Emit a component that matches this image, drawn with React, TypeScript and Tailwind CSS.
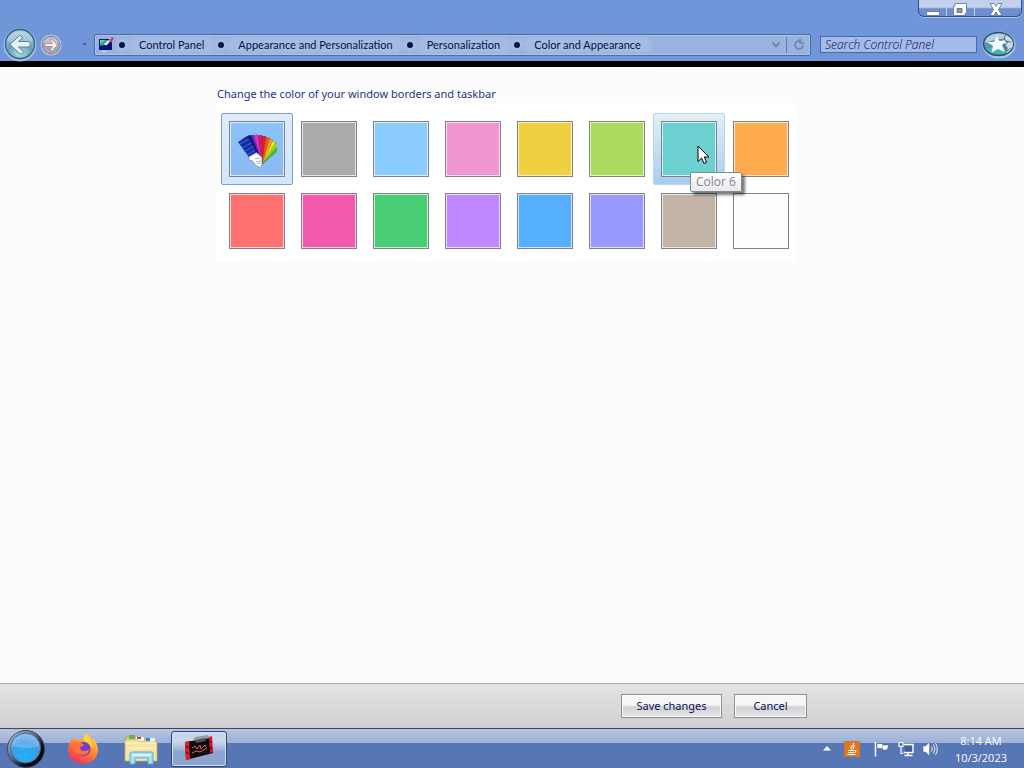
import React, { useState } from 'react'

interface Swatch {
  name: string
  fill: string
}

const swatches: Swatch[] = [
  { name: 'Custom', fill: 'bg-linear-to-b from-[#8cc4fb] to-[#8bb9f2]' },
  { name: 'Color 1', fill: 'bg-[#aaaaaa]' },
  { name: 'Color 2', fill: 'bg-[#8accff]' },
  { name: 'Color 3', fill: 'bg-[#f296d2]' },
  { name: 'Color 4', fill: 'bg-[#f0d040]' },
  { name: 'Color 5', fill: 'bg-[#acda5c]' },
  { name: 'Color 6', fill: 'bg-[#6cd0d0]' },
  { name: 'Color 7', fill: 'bg-[#ffac50]' },
  { name: 'Color 8', fill: 'bg-[#ff7070]' },
  { name: 'Color 9', fill: 'bg-[#f25aac]' },
  { name: 'Color 10', fill: 'bg-[#48cc74]' },
  { name: 'Color 11', fill: 'bg-[#c088ff]' },
  { name: 'Color 12', fill: 'bg-[#56aeff]' },
  { name: 'Color 13', fill: 'bg-[#9898ff]' },
  { name: 'Color 14', fill: 'bg-[#c2b4a6]' },
  { name: 'Color 15', fill: 'bg-[#fdfdfd]' }
]

const crumbs = ['Control Panel', 'Appearance and Personalization', 'Personalization', 'Color and Appearance']

const BackIcon = () => (
  <svg viewBox="0 0 34 34" className="size-[34px]">
    <defs>
      <radialGradient id="back" cx="50%" cy="85%" r="85%">
        <stop offset="0" stopColor="#a6dce4" />
        <stop offset="0.5" stopColor="#6a9fb8" />
        <stop offset="1" stopColor="#a9cfe0" />
      </radialGradient>
    </defs>
    <circle cx="17" cy="17" r="16.5" fill="#a8cce8" fillOpacity="0.8" />
    <circle cx="17" cy="16" r="14.5" fill="url(#back)" stroke="#34617f" strokeWidth="1.3" />
    <path d="M4 13a13.5 13.5 0 0 1 26 0q-13 5-26 0z" fill="#fff" fillOpacity="0.3" />
    <path d="M7 16.500 16 8q3.500-1 3 2.500L15.500 13.500H26q3 2.700 0 5.500H15.500L20.500 23.500q0 3.500-4 2z" fill="#e6f0f4" stroke="#4a7f99" strokeWidth="0.9" />
  </svg>
)

const ForwardIcon = () => (
  <svg viewBox="0 0 22 22" className="size-[22px]">
    <circle cx="11" cy="11" r="10.5" fill="#c5d4ea" fillOpacity="0.9" />
    <circle cx="11" cy="11" r="9" fill="#aaa4b2" stroke="#7d7f92" />
    <path d="M3 9a8.500 8.500 0 0 1 16 0q-8 3-16 0z" fill="#fff" fillOpacity="0.3" />
    <path d="M17.500 11 12 5.500q-2-.5-1.500 1.500L12.500 9.500H5v3h7.500L10.500 15.500q0 2 2 1.200z" fill="#f6f0ef" stroke="#8c8593" strokeWidth="0.7" />
  </svg>
)

const PersonalizeIcon = () => (
  <svg viewBox="0 0 16 16" className="size-4">
    <path d="M1 2h13v11H1z" fill="#10107a" />
    <path d="M2 3h9L6 8l-4 1z" fill="#2fae5a" />
    <path d="M2 3h5L2 7z" fill="#5ccbd8" />
    <path d="M6 7q1 2 3 1l4-5-1-1z" fill="#f4f4ff" />
    <path d="m11 4 3-4 2 1-3 5z" fill="#c93a86" />
    <path d="M4 14h4v1H4z" fill="#d8e6d8" />
  </svg>
)

const StarOrb = () => (
  <svg viewBox="0 0 34 28" className="h-7 w-[34px]">
    <ellipse cx="17" cy="14" rx="16.5" ry="13.5" fill="#a5c8e6" />
    <ellipse cx="16.5" cy="13" rx="15" ry="11.5" fill="#5794ac" stroke="#274e6c" strokeWidth="1.4" />
    <path d="M2.500 12Q4 3 16 2.500T30 12q-7-5-13-4T2.500 12z" fill="#b7cfdf" />
    <path d="M4 18q8 8 21 3l-8-6z" fill="#45b5b2" />
    <path d="M24 4q7 3 7 9t-8 10l3-6-4-5z" fill="#c9dbe6" />
    <path d="m14.500 5 3 5 8-1-5.500 5 3 7-7-3-6.500 3.500 1.500-6.500-6-4h7z" fill="#f6fafb" />
    <path d="m24 2-2 6 4 3-4 4 3 4-3 6m1-15 6 1m-4 9 4-3" fill="none" stroke="#40697f" strokeWidth="0.9" />
  </svg>
)

const FanIcon = () => {
  const blades = ['#3fc832', '#8fdc28', '#f0e020', '#f5a01c', '#ee5a24', '#e0202a', '#d81c64', '#e030c8', '#7a28c0', '#2434b8']
  return (
    <svg viewBox="0 0 40 38" className="mt-0.5 h-[38px] w-10">
      {blades.map((color, i) => (
        <path
          key={color}
          d={`M20 ${8 - i * 0.6}h7l-2 ${24 + i * 0.6}h-3z`}
          fill={color}
          stroke="#20104055"
          strokeWidth="0.5"
          transform={`rotate(${44 - i * 8} 23.5 33)`}
        />
      ))}
      <path d="M1 11 10 5l11 19-7 5z" fill="#1430a4" />
      <path d="M10 5 14 4l8 19-1 1z" fill="#0c1c78" />
      <path d="m3 13 9-5M5 17l9-5M7.500 20.500l9-5M10 24l8-5" stroke="#4064dc" />
      <path d="m11.500 26 8-4.500 5.500 5v7l-2 3-4-2-4-5-2 .500z" fill="#fff" stroke="#70758c" strokeWidth="0.6" />
      <path d="m18 28 5-1m-4 4 5-1m-4 3 4-1" stroke="#a9adb9" />
    </svg>
  )
}

const CursorIcon = () => (
  <svg viewBox="0 0 13 20" className="absolute left-11 top-8 z-10 h-5 w-[13px]">
    <path d="M1 1v15.500l3.700-3.500L7 18.500l2.600-1.200L7.300 12H12z" fill="#fff" stroke="#000" />
  </svg>
)

const StartOrb = () => (
  <svg viewBox="0 0 40 38" className="h-[38px] w-10">
    <defs>
      <radialGradient id="orb" cx="50%" cy="75%" r="75%">
        <stop offset="0" stopColor="#24b2ff" />
        <stop offset="0.6" stopColor="#3c9ce4" />
        <stop offset="1" stopColor="#7ab6e6" />
      </radialGradient>
      <linearGradient id="rim" x2="1" y2="1">
        <stop offset="0" stopColor="#c9d4e4" />
        <stop offset="0.45" stopColor="#56637b" />
        <stop offset="0.7" stopColor="#05080f" />
      </linearGradient>
    </defs>
    <circle cx="20" cy="19" r="18.5" fill="url(#rim)" stroke="#3b4963" />
    <circle cx="19.5" cy="18" r="15" fill="url(#orb)" stroke="#4a6a8c" />
    <path d="M5.500 16q2-11 14-12 12 1 14 12-14 4-28 0z" fill="#fff" fillOpacity="0.2" />
  </svg>
)

const FirefoxIcon = () => (
  <svg viewBox="0 0 32 32" className="size-8">
    <defs>
      <linearGradient id="fox" x1="0.8" x2="0.2" y2="1">
        <stop offset="0" stopColor="#ffe14a" />
        <stop offset="0.45" stopColor="#ff8a2c" />
        <stop offset="1" stopColor="#f5285e" />
      </linearGradient>
    </defs>
    <path d="M19 0q4 2 6 7 .5-1 .3-2.500Q31 10 31 17q-1 13-15 13.500Q2 30 1 17q0-6 3-9 0-2 1-4 1 2 2.500 3Q11 6 13 7q2-1 4-1 0-4 2-6z" fill="url(#fox)" />
    <circle cx="16.5" cy="16" r="7" fill="#6f3bd2" />
    <path d="M6 11q5-3 8-1 3 1 3 2-1 2-4 2 0 4 4 4 3 0 5-2 0 6-7 6-8-1-9-11z" fill="#ff7139" />
    <path d="M18 1q7 5 8 14-3-5-8-7-3-3 0-7z" fill="#ffd43a" />
  </svg>
)

const ExplorerIcon = () => (
  <svg viewBox="0 0 34 32" className="h-8 w-[34px]">
    <path d="M2 4h10l2 2h15v21H2z" fill="#e9cf78" stroke="#b89a48" strokeWidth="0.7" />
    <path d="M5 2h6v4H5z" fill="#68b054" />
    <path d="M12 4h8v4h-8zM25 5h6v5h-6z" fill="#f4f2e6" />
    <path d="M13 4h4v2h-4z" fill="#c9452f" />
    <path d="M22 5h4v3h-4z" fill="#3a86c8" />
    <path d="M1 7h13l2 2h17v19H1z" fill="#f6e5a0" stroke="#cdb05c" strokeWidth="0.7" />
    <path d="M2 10h30M2 15h30" stroke="#fdf4cc" />
    <path d="M6 31V21q0-2 2-2h19q2 0 2 2v10h-5v-6H11v6z" fill="#a8dff2" stroke="#5aa8cc" />
    <path d="M8 22h19" stroke="#ecfaff" strokeWidth="1.5" />
  </svg>
)

const RedBoxIcon = () => (
  <svg viewBox="0 0 32 28" className="h-7 w-8">
    <path d="m10 5 2-3 13-2 3 4z" fill="#989ca4" />
    <path d="M2 7 28 3l2 15L3 25z" fill="#110a0c" />
    <path d="m2 7 4-1 1 18-4 1z" fill="#e51d2c" />
    <path d="m26 2 3-1 1 16-3 1z" fill="#d81828" />
    <path d="m12 5 10-2 1 3-10 2z" fill="#50535a" />
    <path d="m9 13 3-2 2 3 3-4 1 4 4-4 1 2M9 18l4-2 4 1 7-4" fill="none" stroke="#e8707a" strokeWidth="0.9" />
    <path d="m3 11 3 2m-3 4 3 2m21-13 2 2m-2 4 2 2" stroke="#6c0810" strokeWidth="1.3" />
  </svg>
)

const JavaIcon = () => (
  <svg viewBox="0 0 16 16" className="size-4">
    <path d="M.5.5h15v15H.5z" fill="#e8741c" stroke="#c07a40" />
    <path d="M9.500 2Q10 4 8 5t0 3.500M11 4.500Q8.500 5.500 9.500 8M4 9.500h6.500m-6 2H10M3.500 13.500h8M11 9.500q2 1-.5 2" fill="none" stroke="#fff" strokeWidth="1.1" />
  </svg>
)

const FlagIcon = () => (
  <svg viewBox="0 0 16 16" className="size-4">
    <path d="M1.500 1v14.500" stroke="#fff" strokeWidth="1.5" />
    <path d="M3 2.500h5.500V4h6.500l-2 5H8.500V7.500H3z" fill="#fff" stroke="#33496f" strokeWidth="0.5" />
    <path d="M8.500 3v5" stroke="#8fa5cc" strokeWidth="0.8" />
  </svg>
)

const NetworkIcon = () => (
  <svg viewBox="0 0 16 16" className="size-4">
    <path d="M6 3.500h9v8H5.500M10 12v2.500M6.500 14.500h8" fill="none" stroke="#fff" strokeWidth="1.4" />
    <path d="M1 1.500h4v4H1zM3 6v6.500h2" fill="none" stroke="#fff" strokeWidth="1.2" />
    <path d="M7 5h7v5.500H7z" fill="#3f5f9c" />
  </svg>
)

const VolumeIcon = () => (
  <svg viewBox="0 0 16 16" className="size-4">
    <path d="M1 5h2.500L7.500 1v14L3.500 11H1z" fill="#fff" stroke="#33496f" strokeWidth="0.4" />
    <path d="M9.500 5.500q1.500 2.500 0 5M11.500 3.500q3 4.500 0 9M13.500 2q3.500 6 0 12" fill="none" stroke="#e4ecf8" />
  </svg>
)

const CaptionButtons = () => (
  <div className="mr-0.5 flex h-[17px] w-26 rounded-b-md border border-t-0 border-[#344f86] bg-linear-to-b from-[#c3d1ec] from-45% to-[#6d8fcf] to-55% shadow-[0_1px_0_#a9c2ee]">
    <button aria-label="Minimize" className="flex w-7 items-end justify-center border-r border-[#c3d4f2]">
      <svg viewBox="0 0 14 5" className="h-[5px] w-3.5"><path d="M.5.5h13v4H.5z" fill="#fff" stroke="#5d6f96" strokeWidth="0.8" /></svg>
    </button>
    <button aria-label="Restore" className="flex w-7 items-end justify-center border-r border-[#c3d4f2]">
      <svg viewBox="0 0 15 13" className="h-[13px] w-[15px]">
        <path d="M2 .5h11.500v10H12v2H.5V3H2z" fill="#fff" stroke="#5d6f96" strokeWidth="0.8" />
        <path d="M4 5.500h5v4H4z" fill="#8c98b4" stroke="#4d5f86" strokeWidth="0.8" />
      </svg>
    </button>
    <button aria-label="Close" className="flex flex-1 items-end justify-center pr-1">
      <svg viewBox="0 0 14 13" className="h-[13px] w-3.5">
        <path d="M1 .5h4l2 3 2-3h4L9.500 6.500 13 12.500H9L7 9l-2 3.500H1L4.500 6.500z" fill="#fff" stroke="#5d6f96" strokeWidth="0.8" />
      </svg>
    </button>
  </div>
)

const Header = () => (
  <header className="border-b-6 border-black bg-[#7095d8]">
    <div className="flex h-7 justify-end">
      <CaptionButtons />
    </div>
    <div className="flex h-[33px] items-center px-[3px]">
      <button aria-label="Back"><BackIcon /></button>
      <button aria-label="Forward" className="ml-[3px]"><ForwardIcon /></button>
      <button aria-label="Recent pages" className="ml-5">
        <svg viewBox="0 0 5 4" className="h-1 w-[5px]"><path d="M0 0h5L2.500 3z" fill="#4468ac" /></svg>
      </button>
      <nav className="ml-[7px] flex h-[22px] min-w-0 flex-1 items-center rounded-xs border border-[#4a6aa8] bg-[#9ab3de] pl-[3px] shadow-[inset_0_0_0_1px_#a9c2e8]">
        <PersonalizeIcon />
        <ol className="flex flex-1 items-center font-['Lato',sans-serif] text-[11px] whitespace-nowrap text-[#0c1040]">
          {crumbs.map((crumb) => (
            <li key={crumb} className="flex items-center">
              <span className="mx-[5px] size-1.5 rounded-full bg-[#0a1040] shadow-[0_0_4px_2px_#aec6ec]" />
              <a href="#" className="rounded-full bg-[#aec6ec]/50 px-[9px] leading-3 shadow-[0_0_4px_2px_#aec6ec80]">{crumb}</a>
            </li>
          ))}
        </ol>
        <button aria-label="Previous locations" className="px-[5px]">
          <svg viewBox="0 0 10 8" className="h-2 w-2.5"><path d="m1.500 1.500 3.500 4 3.500-4" fill="none" stroke="#687da6" strokeWidth="1.8" /></svg>
        </button>
        <button aria-label="Refresh" className="flex h-4 w-6 items-center justify-center border-l border-[#5d7eb8]">
          <svg viewBox="0 0 12 12" className="size-3"><path d="M8 2.500a4 4 0 1 0 2 3.500M7 0v4h4" fill="none" stroke="#6d81a6" strokeWidth="1.6" /></svg>
        </button>
      </nav>
      <input
        type="search"
        aria-label="Search Control Panel"
        placeholder="Search Control Panel"
        className="ml-[9px] h-[17px] w-[157px] border border-[#4a6aa8] bg-[#a3baea] px-1 font-['Open_Sans',sans-serif] text-xs font-light italic placeholder:text-[#0c1040]"
      />
      <button aria-label="Favorites" className="ml-[5px] mr-[5px]"><StarOrb /></button>
    </div>
  </header>
)

interface SwatchButtonProps {
  swatch: Swatch
  selected: boolean
  hovered: boolean
  onSelect: () => void
}

const SwatchButton: React.FC<SwatchButtonProps> = ({ swatch, selected, hovered, onSelect }) => {
  const frame = selected
    ? 'border-[#7f9dc2] bg-linear-to-b from-[#dfebfa] to-[#d4e6fc]'
    : hovered
      ? 'border-[#b4d8ee] bg-linear-to-b from-[#e4f0f6] to-[#a8ccee]'
      : 'border-transparent'

  return (
    <div className="relative">
      <button
        aria-label={swatch.name}
        aria-pressed={selected}
        onClick={onSelect}
        className={`block size-18 rounded-xs border p-[7px] ${frame}`}
      >
        <span className={`flex size-14 items-center justify-center border border-[#808088] shadow-[inset_0_0_0_1px_#ffffffb0] ${swatch.fill}`}>
          {swatch.name === 'Custom' && <FanIcon />}
        </span>
      </button>
      {hovered && (
        <>
          <CursorIcon />
          <div role="tooltip" className="absolute left-[37px] top-[59px] z-10 rounded-xs border border-[#86868c] bg-linear-to-b from-white to-[#e8e8f0] px-[5px] text-xs leading-[18px] whitespace-nowrap text-[#85858a] shadow-[3px_3px_3px_#00000088]">
            {swatch.name}
          </div>
        </>
      )}
    </div>
  )
}

const Taskbar = () => (
  <footer className="flex h-10 items-center border-t border-[#35496f] bg-linear-to-b from-[#b9c5de] from-0% via-[#9db0d8] via-35% to-[#5676b6] to-36% pl-1.5">
    <button aria-label="Start"><StartOrb /></button>
    <button aria-label="Firefox" className="ml-[21px]"><FirefoxIcon /></button>
    <button aria-label="Explorer" className="ml-[25px]"><ExplorerIcon /></button>
    <button aria-label="Color and Appearance" className="ml-[13px] flex h-9 w-14 items-center justify-center rounded-[3px] border border-[#2f456f] bg-linear-to-b from-[#c9d5ea] from-30% to-[#8ba4d2] to-60% shadow-[inset_0_0_0_1px_#d5e0f2]">
      <RedBoxIcon />
    </button>
    <div className="ml-auto flex items-center">
      <button aria-label="Show hidden icons" className="mr-[13px]">
        <svg viewBox="0 0 8 5" className="h-[5px] w-2"><path d="M0 4.500 4 0l4 4.500z" fill="#fff" /></svg>
      </button>
      <button aria-label="Java"><JavaIcon /></button>
      <button aria-label="Action Center" className="ml-3.5"><FlagIcon /></button>
      <button aria-label="Network" className="ml-2"><NetworkIcon /></button>
      <button aria-label="Volume" className="ml-2"><VolumeIcon /></button>
      <div className="mx-[17px] text-center text-[11px] leading-[17px] text-white">
        <div>8:14 AM</div>
        <div>10/3/2023</div>
      </div>
    </div>
  </footer>
)

const App = () => {
  const [selected, setSelected] = useState('Custom')
  const actionClass =
    "h-6 border border-[#8e8f94] bg-linear-to-b from-[#f6f6f6] from-45% via-[#d2d2d2] via-55% to-[#e6e6e6] font-['Noto_Sans',sans-serif] text-[11px] shadow-[inset_0_0_0_1px_#fafafa]"

  return (
    <div className="flex min-h-screen flex-col bg-[#fcfcfc] font-['Open_Sans',sans-serif] text-[#0c1060]">
      <Header />
      <main className="flex-1">
        <div className="mx-auto w-[590px] pt-[18px]">
          <h1 className="font-['Noto_Sans',sans-serif] text-[11px] leading-[18px] text-[#1c348c]">Change the color of your window borders and taskbar</h1>
          <div className="grid w-max grid-cols-8 bg-white pb-1 pl-1 pt-2.5">
            {swatches.map((swatch) => (
              <SwatchButton
                key={swatch.name}
                swatch={swatch}
                selected={selected === swatch.name}
                hovered={swatch.name === 'Color 6'}
                onSelect={() => setSelected(swatch.name)}
              />
            ))}
          </div>
        </div>
      </main>
      <div className="border-t border-[#a8a8a8] bg-linear-to-b from-[#e4e4e4] to-[#cfcfcf]">
        <div className="mx-auto flex h-11 w-[590px] items-center justify-end gap-3">
          <button className={`w-[101px] ${actionClass}`}>Save changes</button>
          <button className={`w-[73px] ${actionClass}`}>Cancel</button>
        </div>
      </div>
      <Taskbar />
    </div>
  )
}

export default App
